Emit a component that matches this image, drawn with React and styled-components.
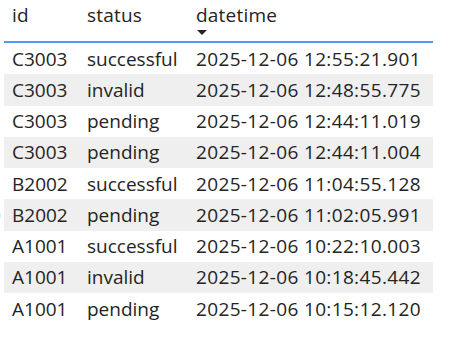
import styled, { createGlobalStyle } from "styled-components";

const rows = [
	["C3003", "successful", "2025-12-06 12:55:21.901"],
	["C3003", "invalid", "2025-12-06 12:48:55.775"],
	["C3003", "pending", "2025-12-06 12:44:11.019"],
	["C3003", "pending", "2025-12-06 12:44:11.004"],
	["B2002", "successful", "2025-12-06 11:04:55.128"],
	["B2002", "pending", "2025-12-06 11:02:05.991", true],
	["A1001", "successful", "2025-12-06 10:22:10.003"],
	["A1001", "invalid", "2025-12-06 10:18:45.442"],
	["A1001", "pending", "2025-12-06 10:15:12.120"],
];

export default function App() {
	return (
		<>
			<Global />
			<Table>
				<Header>
					<HeadCell>id</HeadCell>
					<HeadCell>status</HeadCell>
					<HeadCell>
						datetime
						<SortArrow />
					</HeadCell>
				</Header>
				{rows.map(([id, status, dt, clipped], i) => (
					<Row key={i} $shaded={i % 2 === 1}>
						{clipped && <Clipped>0</Clipped>}
						<Cell>{id}</Cell>
						<Cell>{status}</Cell>
						<Cell $digits>{dt}</Cell>
					</Row>
				))}
			</Table>
		</>
	);
}

const Global = createGlobalStyle`
	body {
		margin: 0;
		background: #fff;
		font-family: "Open Sans", "Noto Sans", sans-serif;
		color: #252423;
	}
`;

const Table = styled.div`
	width: 429px;
	margin-left: 4px;
	display: flex;
	flex-direction: column;
`;

const Header = styled.div`
	display: grid;
	grid-template-columns: 75px 109px 1fr;
	height: 41px;
	border-bottom: 2px solid #4a9eea;
	padding-left: 8px;
`;

const HeadCell = styled.div`
	position: relative;
	font-size: 19px;
	line-height: 22px;
	padding-top: 4px;
	letter-spacing: 0.2px;
`;

const SortArrow = styled.span`
	position: absolute;
	left: 1px;
	top: 30px;
	width: 0;
	height: 0;
	border-left: 5.5px solid transparent;
	border-right: 5.5px solid transparent;
	border-top: 5px solid #252423;
`;

const Row = styled.div`
	position: relative;
	display: grid;
	grid-template-columns: 75px 109px 1fr;
	align-items: center;
	height: 31.25px;
	padding-left: 8px;
	background: ${(p) => (p.$shaded ? "#efefef" : "#fff")};
`;

const Cell = styled.div`
	font-size: 19px;
	white-space: nowrap;
	letter-spacing: ${(p) => (p.$digits ? "0.35px" : "0")};
`;

const Clipped = styled.span`
	position: absolute;
	left: -14px;
	font-size: 19px;
	color: #444;
`;
